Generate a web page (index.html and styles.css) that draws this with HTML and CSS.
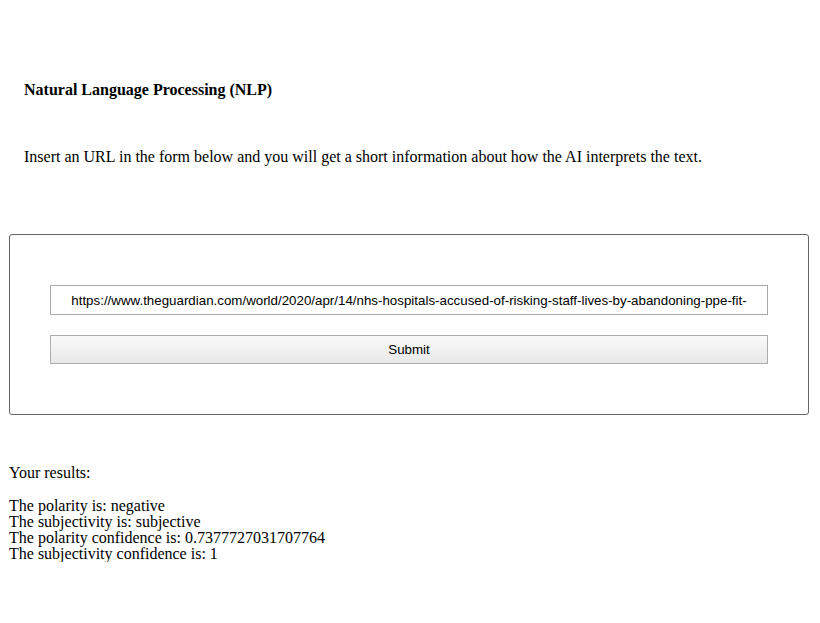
FILE: index.html
```html
<!DOCTYPE html>
<html>
<head>
<meta charset="utf-8">
<link rel="stylesheet" href="styles.css">
</head>
<body>
<header class="intro">
  <h4 class="title">Natural Language Processing (NLP)</h4>
  <p class="lead">Insert an URL in the form below and you will get a short information about how the AI interprets the text.</p>
</header>
<form class="url-form">
  <input class="url-input" type="text" value="https://www.theguardian.com/world/2020/apr/14/nhs-hospitals-accused-of-risking-staff-lives-by-abandoning-ppe-fit-">
  <button class="submit" type="button">Submit</button>
</form>
<section class="results">
  <p class="results-title">Your results:</p>
  <div class="results-list">
    <div>The polarity is: negative</div>
    <div>The subjectivity is: subjective</div>
    <div>The polarity confidence is: 0.7377727031707764</div>
    <div>The subjectivity confidence is: 1</div>
  </div>
</section>
</body>
</html>
```
FILE: styles.css
```css
html, body {
  margin: 0;
  padding: 0;
  background: #fff;
}
body {
  font-family: "Liberation Serif", "Times New Roman", serif;
  font-size: 16px;
  color: #000;
  padding: 0 0 0 9px;
}
.intro {
  padding: 81px 15px 0 15px;
}
.title {
  margin: 0;
  font-size: 16px;
  font-weight: bold;
  line-height: 18px;
}
.lead {
  margin: 49px 0 0 0;
  line-height: 18px;
}
.url-form {
  box-sizing: border-box;
  width: 800px;
  margin-top: 68px;
  border: 1px solid #666;
  border-radius: 3px;
  padding: 50px 40px;
  display: flex;
  flex-direction: column;
  gap: 20px;
}
.url-input {
  box-sizing: border-box;
  width: 100%;
  height: 30px;
  margin: 0;
  border: 1px solid #a9a9a9;
  padding: 0 4px;
  font-family: "Liberation Sans", Arial, sans-serif;
  font-size: 13.33px;
  color: #000;
  text-align: center;
  outline: none;
  overflow: hidden;
}
.submit {
  box-sizing: border-box;
  width: 100%;
  height: 29px;
  margin: 0;
  border: 1px solid #adadad;
  border-radius: 0;
  background: linear-gradient(#fafafa, #e8e8e8);
  font-family: "Liberation Sans", Arial, sans-serif;
  font-size: 13.33px;
  color: #000;
}
.results {
  margin-top: 49px;
}
.results-title {
  margin: 0;
  line-height: 18px;
}
.results-list {
  margin-top: 16px;
  line-height: 16px;
}
```
